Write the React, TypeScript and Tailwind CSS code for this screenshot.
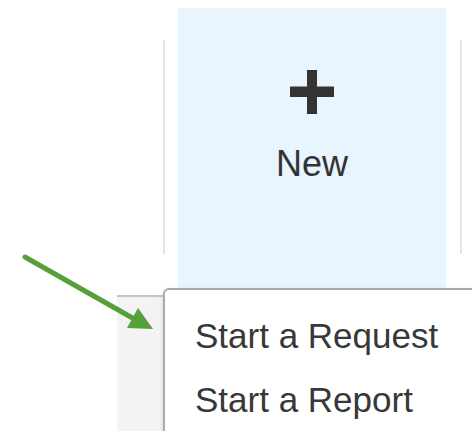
import React from 'react';

const items = ['Start a Request', 'Start a Report'];

function PlusIcon() {
  return (
    <svg width="44" height="44" viewBox="0 0 44 44" aria-hidden="true">
      <rect x="17" y="0" width="10" height="44" fill="#333333" />
      <rect x="0" y="16.5" width="44" height="10.5" fill="#333333" />
    </svg>
  );
}

function Pointer() {
  return (
    <svg
      className="pointer-events-none absolute left-0 top-0"
      width="472"
      height="431"
      viewBox="0 0 472 431"
      aria-hidden="true"
    >
      <line x1="25" y1="257" x2="136" y2="320" stroke="#55a03a" strokeWidth="5" strokeLinecap="round" />
      <polygon points="153,329 127,328 138,308" fill="#55a03a" />
    </svg>
  );
}

export default function App(): JSX.Element {
  return (
    <div
      className="relative h-[431px] w-[472px] overflow-hidden bg-white"
      style={{ fontFamily: '"Liberation Sans", Arial, sans-serif' }}
    >
      {/* toolbar */}
      <div className="flex h-[295px] items-start pt-[8px]">
        <div className="ml-[163px] mt-[32px] h-[214px] w-[2px] bg-[#e4e4e4]" />
        <div className="ml-[13px] flex h-[287px] w-[268px] flex-col items-center bg-[#e8f4fe] pt-[62px]">
          <PlusIcon />
          <span className="mt-[32px] text-[36px] leading-[36px] text-[#333333]">New</span>
        </div>
        <div className="ml-[14px] mt-[32px] h-[214px] w-[2px] bg-[#e4e4e4]" />
      </div>

      {/* panel below the toolbar */}
      <div className="ml-[117px] h-[136px] border-t-2 border-[#c4c4c4] bg-[#f3f3f3]" />

      {/* dropdown */}
      <div className="absolute left-[163px] top-[288px] h-[160px] w-[320px] rounded-tl-[6px] border-l-2 border-t-2 border-[#aaaaaa] bg-white pl-[30px] pt-[14px] shadow-[0_2px_4px_rgba(0,0,0,0.15)]">
        {items.map((label) => (
          <div key={label} className="text-[35px] leading-[64px] text-[#383838]">
            {label}
          </div>
        ))}
      </div>

      <Pointer />
    </div>
  );
}
